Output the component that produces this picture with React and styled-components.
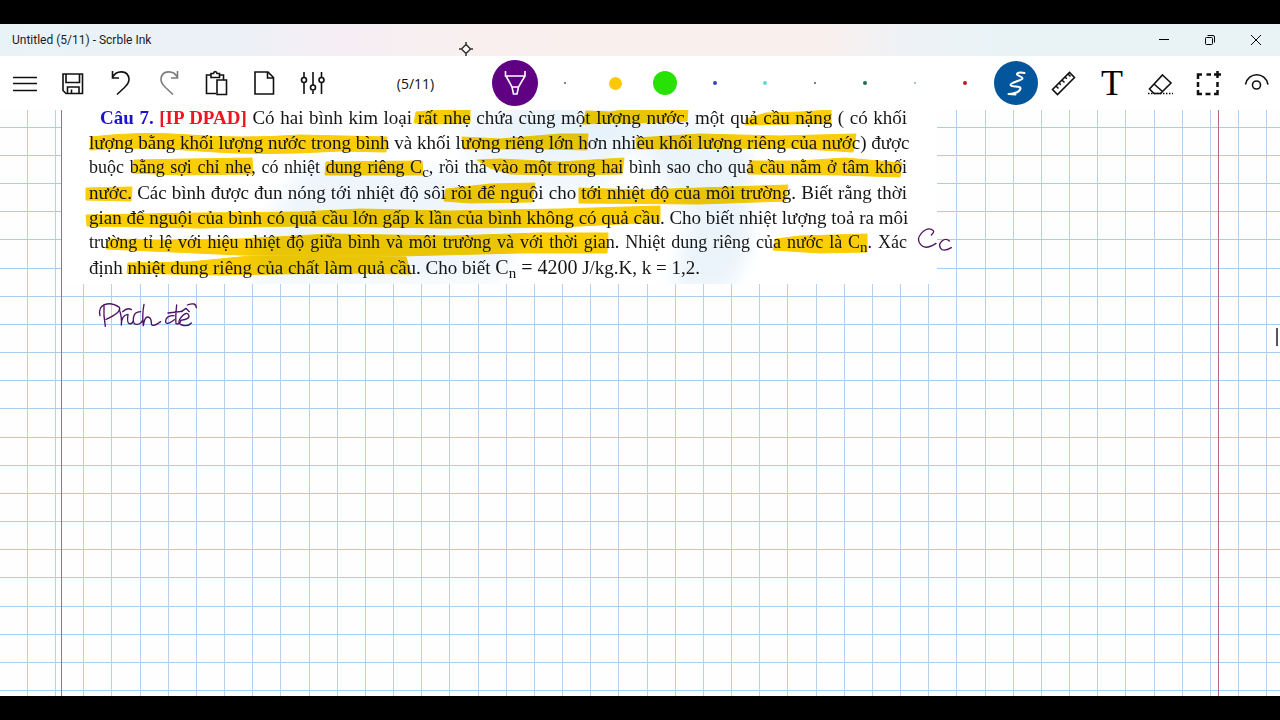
import React, { useState } from 'react'
import styled, { createGlobalStyle } from 'styled-components'

const GlobalStyle = createGlobalStyle`
  * { box-sizing: border-box; }
  body {
    margin: 0;
    background: #000;
    font-family: "Open Sans", "Noto Sans", sans-serif;
  }
  button {
    border: none;
    background: none;
    padding: 0;
    color: inherit;
    font: inherit;
    cursor: pointer;
  }
`

const Screen = styled.div`
  height: 100vh;
  padding: 24px 0;
  background: #000;
  display: flex;
  flex-direction: column;
`

const TitleBar = styled.header`
  flex: none;
  height: 32px;
  padding: 0 1px 0 12px;
  display: flex;
  align-items: center;
  justify-content: space-between;
  background: linear-gradient(90deg, #e8f3f8 0%, #ecf1f7 18%, #f6eef4 27%, #f9efee 38%, #f9efed 64%, #eef2f6 71%, #e9f3f6 78%);
  h1 {
    margin: 0;
    font-family: Roboto, "Open Sans", sans-serif;
    font-size: 12px;
    font-weight: 400;
    color: #1c1c1c;
  }
`

const WindowButtons = styled.div`
  display: flex;
`

const WindowButton = styled.button`
  width: 46px;
  height: 32px;
  display: flex;
  align-items: center;
  justify-content: center;
`

const Toolbar = styled.nav`
  flex: none;
  height: 54px;
  padding-left: 1px;
  display: flex;
  align-items: center;
  background: #fff;
  color: #111;
`

const Group = styled.div`
  display: flex;
  align-items: center;
`

const PenGroup = styled(Group)`
  margin-right: 2px;
`

const ToolButton = styled.button`
  width: 48px;
  height: 48px;
  display: flex;
  align-items: center;
  justify-content: center;
  color: ${(p) => (p.$muted ? '#7d7d7d' : '#111')};
`

const PageCount = styled.span`
  flex: 1;
  padding-left: 4px;
  text-align: center;
  font-size: 14px;
`

const PenButton = styled.button`
  width: 50px;
  height: 48px;
  display: flex;
  align-items: center;
  justify-content: center;
`

const Dot = styled.span`
  width: ${(p) => p.$size}px;
  height: ${(p) => p.$size}px;
  border-radius: 50%;
  background: ${(p) => p.$color};
  color: #fff;
  display: flex;
  align-items: center;
  justify-content: center;
`

const LetterIcon = styled.span`
  font-family: "Liberation Serif", serif;
  font-size: 36px;
  line-height: 48px;
  color: #000;
`

const Icon = styled.svg`
  display: block;
  fill: none;
  stroke: currentColor;
  stroke-width: ${(p) => p.$weight || 1.6};
`

const Canvas = styled.main`
  flex: 1;
  min-height: 0;
  position: relative;
  overflow: hidden;
  background: #fefefe;
`

const Paper = styled.svg`
  position: absolute;
  inset: 0;
  width: 100%;
  height: 100%;
`

const Clipping = styled.article`
  position: absolute;
  left: 62px;
  top: -5px;
  width: 875px;
  padding: 0 30px 4px 27px;
  background: #fff;
  isolation: isolate;
`

const Marks = styled.svg`
  position: absolute;
  left: 0;
  top: 0;
  width: 875px;
  height: 179px;
  z-index: -1;
  .strokes {
    fill: #fbcd05;
    stroke: #fbcd05;
    stroke-linejoin: round;
    mix-blend-mode: multiply;
  }
`

const Line = styled.p`
  margin: 0;
  padding-left: ${(p) => (p.$indent ? 11 : 0)}px;
  font-family: "Liberation Serif", serif;
  font-size: ${(p) => (p.$tight ? 18 : 19)}px;
  line-height: 25px;
  white-space: nowrap;
  color: #161616;
  text-align: justify;
  text-align-last: ${(p) => (p.$last ? 'left' : 'justify')};
  sub {
    font-size: 15px;
    line-height: 0;
    vertical-align: -4px;
  }
`

const Formula = styled.span`
  font-size: 20px;
  line-height: 0;
`

const Label = styled.b`
  color: ${(p) => p.$color};
`

const Ink = styled.svg`
  position: absolute;
  left: ${(p) => p.$x}px;
  top: ${(p) => p.$y}px;
  fill: none;
  stroke: #4b1266;
  stroke-width: 4;
  stroke-linecap: round;
  stroke-linejoin: round;
`

const PanelHandle = styled.button`
  && {
    position: absolute;
    right: 2px;
    top: 218px;
    width: 2px;
    height: 18px;
    background: #555;
  }
`

const Cursor = styled.svg`
  position: fixed;
  left: 458px;
  top: 41px;
  pointer-events: none;
`

const fileTools = [
  { name: 'Menu', art: <path d="M12 18.500h24M12 24.500h24M12 31.500h24" /> },
  {
    name: 'Save',
    art: <path d="M14 15h19.500v19.500H17l-3-3zM17 15v8.500h13.500V15M18.500 34v-6h11.500v6M22.500 34v-3.500" />,
  },
  { name: 'Undo', art: <path d="M15.500 12v7H22M15.500 18.500C19 11 31 10.500 32 20c.3 4-2 6-4.500 8.500L20 35.500" /> },
  {
    name: 'Redo',
    muted: true,
    art: <path d="M32.500 12v7H26M32.500 18.500C29 11 17 10.500 16 20c-.3 4 2 6 4.500 8.500L28 35.500" />,
  },
  {
    name: 'Paste',
    art: <path d="M18 16h-4.500v18.500H23M26 16h4.500v5M18 14.500h2.500c.3-2.500 3.200-2.500 3.500 0h2.500v4H18zM24 21h9.500v14.500H24z" />,
  },
  { name: 'New page', art: <path d="M14 13h13l5.500 5.500V35H14zM26.500 13v6h6" /> },
  {
    name: 'Settings',
    art: (
      <>
        <path d="M15 13v5.500M15 24v11M24 13v13M24 31.500V35M32.500 13v5.500M32.500 24v11" />
        <circle cx="15" cy="21" r="2.500" />
        <circle cx="24" cy="28.500" r="2.500" />
        <circle cx="32.500" cy="21" r="2.500" />
      </>
    ),
  },
]

const pens = [
  { name: 'Purple pen', color: '#600083', size: 46 },
  { name: 'Fine pen', color: '#8c4a5c', size: 2 },
  { name: 'Yellow highlighter', color: '#fdc80a', size: 13 },
  { name: 'Green highlighter', color: '#28e205', size: 24 },
  { name: 'Blue pen', color: '#3349ad', size: 4 },
  { name: 'Cyan pen', color: '#62d8da', size: 4 },
  { name: 'Black pen', color: '#555', size: 2 },
  { name: 'Dark green pen', color: '#23704f', size: 4 },
  { name: 'Light green pen', color: '#86bd8c', size: 2 },
  { name: 'Red pen', color: '#b41d30', size: 4 },
]

const inkTools = [
  {
    name: 'Ruler',
    art: <path d="M12.500 30.500L29.500 13.500l5 5-17 17zM16 27l2.500 2.500M19 24l1.800 1.800M22 21l2.500 2.500M25 18l1.800 1.800M28 15l2.500 2.500" />,
  },
  { name: 'Text', letter: 'T' },
  {
    name: 'Eraser',
    art: (
      <>
        <path d="M26.500 16l8.500 8-10.500 10.500H18L13.500 30zM18 25l8.500 7.500" />
        <path d="M12 34.500h25" strokeDasharray="1.500 1.500" />
      </>
    ),
  },
  {
    name: 'Select',
    weight: 2.5,
    art: (
      <>
        <path d="M27 15.500h-4.500M18 15.500h-4V20M14 23v5M14 31v4h4M21.500 35h5M30 35h3.500v-4M33.500 28v-5" />
        <path d="M30 15.500h7M33.500 12v7" />
      </>
    ),
  },
  {
    name: 'View',
    art: (
      <>
        <path d="M13.500 25.500C16 12.500 33.500 12.500 36 25.500" />
        <circle cx="24.500" cy="26" r="4" />
      </>
    ),
  },
]

// highlighter strokes, in window coordinates
const highlights = [
  'M416 112L440 110 470 110V123L430 124 414 123z',
  'M586 111L610 112 630 109 688 109 687 121 640 123 610 123 583 124z',
  'M746 119L766 113 800 112 831 110V123L790 124 745 125z',
  'M91 137Q140 131 190 135T300 135L387 137 386 152 340 151Q260 156 200 151T90 150z',
  'M462 137L500 139 560 134 588 134 587 150 545 149 464 149z',
  'M636 138L700 134 780 136 856 134 853 152 790 148 637 149z',
  'M134 160L190 159 252 158 253 174 180 175 132 173z',
  'M326 162L422 161 423 175 325 175z',
  'M477 160L500 159 560 162 624 158 622 174 560 175 510 174 490 168z',
  'M750 161L800 161 845 158 902 163 900 177 840 175 748 174z',
  'M86 188L132 187 131 201 86 200z',
  'M446 189L490 184 535 183 532 202 470 203 444 201z',
  'M579 188L640 190 730 187 788 185 785 201 700 204 579 203z',
  'M86 215L200 213 300 212 360 209 450 211 560 209 660 206 660 222 560 227 450 228 300 226 200 228 87 226z',
  'M110 239L160 240 240 239 330 234 450 236 540 233 608 233 607 253 520 253 400 256 240 255 106 249z',
  'M776 239L800 236 867 234V252L820 253 773 250z',
  'M128 263L190 262 250 256 330 256 406 257 411 274 340 273 220 275 127 273z',
]

function Tool({ tool }) {
  return (
    <ToolButton type="button" aria-label={tool.name} $muted={tool.muted}>
      {tool.letter ? (
        <LetterIcon>{tool.letter}</LetterIcon>
      ) : (
        <Icon width="48" height="48" viewBox="0 0 48 48" $weight={tool.weight}>
          {tool.art}
        </Icon>
      )}
    </ToolButton>
  )
}

function GridPaper() {
  const squares = [0, 28, 56, 84, 113, 141]
  return (
    <Paper aria-hidden="true">
      <defs>
        {/* six squares to a tile */}
        <pattern id="squares" x="27" y="45" width="169" height="169" patternUnits="userSpaceOnUse">
          {squares.map((n) => (
            <g key={n}>
              <rect x={n} y="0" width="1" height="169" fill="#b4d1ec" />
              <rect x="0" y={n} width="169" height="1" fill="#a9cdec" />
            </g>
          ))}
        </pattern>
      </defs>
      <rect width="100%" height="100%" fill="url(#squares)" />
      <rect x="61" width="1" height="100%" fill="#b9657f" />
      <rect x="1218" width="1" height="100%" fill="#b9657f" />
    </Paper>
  )
}

function Problem() {
  return (
    <Clipping>
      <Marks viewBox="62 105 875 179" aria-hidden="true">
        <defs>
          <filter id="soft" x="-20%" y="-20%" width="140%" height="140%">
            <feGaussianBlur stdDeviation="9" />
          </filter>
        </defs>
        <g filter="url(#soft)" fill="#e3f0fa">
          <path d="M520 104L650 104 750 150 750 250 730 290 670 290 690 220 640 150 500 150z" opacity=".7" />
          <path d="M310 160L460 175 530 215 500 280 250 285 260 230z" opacity=".6" />
          <path d="M450 104H640L600 200 480 190z" opacity=".5" />
        </g>
        <g className="strokes">
          {highlights.map((d) => (
            <path key={d} d={d} />
          ))}
        </g>
      </Marks>
      <Line $indent>
        <Label $color="#1b12d6">Câu 7.</Label> <Label $color="#ee1620">[IP DPAD]</Label> Có hai bình kim loại rất nhẹ
        chứa cùng một lượng nước, một quả cầu nặng ( có khối
      </Line>
      <Line>lượng bằng khối lượng nước trong bình và khối lượng riêng lớn hơn nhiều khối lượng riêng của nước) được</Line>
      <Line $tight>
        buộc bằng sợi chỉ nhẹ, có nhiệt dung riêng C<sub>c</sub>, rồi thả vào một trong hai bình sao cho quả cầu nằm ở
        tâm khối
      </Line>
      <Line>nước. Các bình được đun nóng tới nhiệt độ sôi rồi để nguội cho tới nhiệt độ của môi trường. Biết rằng thời</Line>
      <Line>gian để nguội của bình có quả cầu lớn gấp k lần của bình không có quả cầu. Cho biết nhiệt lượng toả ra môi</Line>
      <Line $tight>
        trường tỉ lệ với hiệu nhiệt độ giữa bình và môi trường và với thời gian. Nhiệt dung riêng của nước là C
        <sub>n</sub>. Xác
      </Line>
      <Line $last>
        định nhiệt dung riêng của chất làm quả cầu. Cho biết{' '}
        <Formula>
          C<sub>n</sub> = 4200
        </Formula>{' '}
        J/kg.K, k = 1,2.
      </Line>
    </Clipping>
  )
}

export default function App() {
  const [pen, setPen] = useState('Purple pen')

  return (
    <Screen>
      <GlobalStyle />
      <TitleBar>
        <h1>Untitled (5/11) - Scrble Ink</h1>
        <WindowButtons>
          <WindowButton type="button" aria-label="Minimize">
            <Icon width="12" height="12" viewBox="0 0 12 12" $weight={1}>
              <path d="M1 5.500h10" />
            </Icon>
          </WindowButton>
          <WindowButton type="button" aria-label="Restore">
            <Icon width="12" height="12" viewBox="0 0 12 12" $weight={1}>
              <rect x="1.500" y="3.500" width="7" height="7" rx="1" />
              <path d="M3.500 1.500H9q1.500 0 1.500 1.500v5.500" />
            </Icon>
          </WindowButton>
          <WindowButton type="button" aria-label="Close">
            <Icon width="12" height="12" viewBox="0 0 12 12" $weight={1}>
              <path d="M1 1l10 10M11 1L1 11" />
            </Icon>
          </WindowButton>
        </WindowButtons>
      </TitleBar>

      <Toolbar>
        <Group>
          {fileTools.map((t) => (
            <Tool key={t.name} tool={t} />
          ))}
        </Group>
        <PageCount>(5/11)</PageCount>
        <PenGroup>
          {pens.map((p) => (
            <PenButton key={p.name} type="button" aria-label={p.name} aria-pressed={pen === p.name} onClick={() => setPen(p.name)}>
              <Dot $color={p.color} $size={p.size}>
                {p.size === 46 && (
                  <Icon width="46" height="46" viewBox="0 0 46 46">
                    <path d="M13.500 11v5h19.500v-5M14 16l6 11h6.500L33 16M20 27l1.500 7h3.500l1.500-7" />
                  </Icon>
                )}
              </Dot>
            </PenButton>
          ))}
        </PenGroup>
        <Group>
          <ToolButton type="button" aria-label="Ink">
            <Dot $color="#03569b" $size={44}>
              <Icon width="44" height="44" viewBox="0 0 44 44" $weight={2} strokeLinecap="round" strokeLinejoin="round">
                <path d="M30.500 12c-5-1-8 0-7.500 1.500s6 2 5.500 4-12.500 4-12 6.500 10.500.5 10 3.500-3 4.500-12 5.500l7 .500" />
              </Icon>
            </Dot>
          </ToolButton>
          {inkTools.map((t) => (
            <Tool key={t.name} tool={t} />
          ))}
        </Group>
      </Toolbar>

      <Canvas>
        <GridPaper />
        <Problem />
        <Ink $x={95} $y={188} width="110" height="50" viewBox="105 309 330 150" role="img" aria-label="Phích đề">
          <path d="M132 328q-2 35 4 66M120 362q-6-25 14-33t44 8q8 14-40 36" />
          <path d="M178 344q8 20 6 46q0-30 20-32M204 358q-4 26 4 28t12-8M188 350q14-14 26-6" />
          <path d="M242 350q-20 0-22 20t12 18 16-14M252 328q-6 30-2 64q4-28 14-26t10 18 28-4" />
          <path d="M342 362q-24 0-25 16t26-4M350 330q-4 36-2 56 10 4 14-8M324 354l42-5" />
          <path d="M362 376q30-4 24-16t-22 6 2 24 28-6M364 350l14-10 10 10M382 330q26-10 27 8" />
        </Ink>
        <Ink $x={915} $y={115} width="40" height="28" viewBox="855 90 120 84" role="img" aria-label="Cc">
          <path d="M904 120q14-12 0-17t-30 12-2 34 46-4M958 138q-10-10-22 0t-4 22 32-2" />
        </Ink>
        <PanelHandle type="button" aria-label="Open side panel" />
      </Canvas>

      <Cursor width="16" height="16" viewBox="0 0 16 16" fill="#fff" stroke="#333" strokeWidth="1.500" aria-hidden="true">
        <path d="M8 3.500L12.500 8 8 12.500 3.500 8zM8 1v2.500M8 12.500V15M1 8h2.500M12.500 8H15" />
      </Cursor>
    </Screen>
  )
}
